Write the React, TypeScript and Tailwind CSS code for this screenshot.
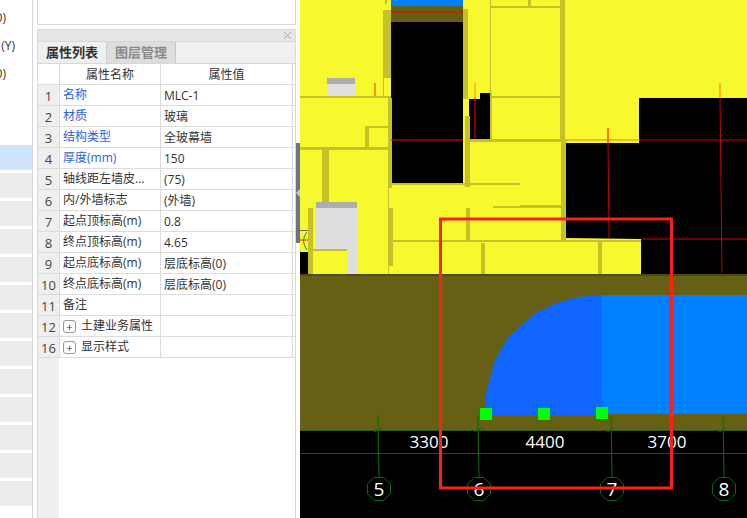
const fontStack = { fontFamily: '"Open Sans", "Noto Sans CJK SC", sans-serif' };

const sideRows = [
  { text: "0)", kind: "plain", pad: "pr-[26px]" },
  { text: "(Y)", kind: "plain", pad: "pr-[17px]" },
  { text: "0)", kind: "plain", pad: "pr-[26px]" },
  { text: "", kind: "plain", pad: "" },
  { text: "", kind: "plain", pad: "" },
  { text: "", kind: "active", pad: "" },
  ...Array.from({ length: 12 }, () => ({ text: "", kind: "gray", pad: "" })),
];

const rows = [
  { no: "1", name: "名称", value: "MLC-1", blue: true },
  { no: "2", name: "材质", value: "玻璃", blue: true },
  { no: "3", name: "结构类型", value: "全玻幕墙", blue: true },
  { no: "4", name: "厚度(mm)", value: "150", blue: true },
  { no: "5", name: "轴线距左墙皮...", value: "(75)" },
  { no: "6", name: "内/外墙标志", value: "(外墙)" },
  { no: "7", name: "起点顶标高(m)", value: "0.8" },
  { no: "8", name: "终点顶标高(m)", value: "4.65" },
  { no: "9", name: "起点底标高(m)", value: "层底标高(0)" },
  { no: "10", name: "终点底标高(m)", value: "层底标高(0)" },
  { no: "11", name: "备注", value: "" },
  { no: "12", name: "土建业务属性", value: "", group: true },
  { no: "16", name: "显示样式", value: "", group: true },
];

// wall strips on the plan, in page coordinates: x, y, w, h
const walls = [
  [383, 10, 8, 68], [385, 0, 2, 4], [383, 78, 1, 18], [300, 96, 91, 2], [388, 98, 4, 90],
  [365, 126, 23, 2], [365, 126, 4, 22], [300, 147, 92, 3], [463, 9, 5, 90], [465, 116, 5, 71],
  [490, 0, 1, 92], [491, 6, 69, 2], [528, 0, 3, 6], [491, 96, 69, 2], [469, 139, 92, 3],
  [490, 92, 2, 47], [560, 0, 5, 140], [561, 140, 5, 100], [520, 205, 41, 2], [393, 240, 248, 2],
  [598, 242, 4, 33], [322, 150, 7, 52], [392, 183, 128, 2], [388, 208, 5, 58], [388, 188, 1, 87],
  [466, 208, 4, 32], [493, 206, 68, 2], [481, 243, 4, 32], [308, 208, 5, 67], [313, 249, 34, 2],
];

const redLines = [
  [391, 12, 463, 12, "#ff0000"], [391, 140, 463, 140, "#ff0000"], [565, 140, 640, 140, "#ff7a10"],
  [640, 140, 747, 140, "#c80000"], [641, 239, 747, 239, "#e00000"], [608, 128, 608, 143, "#ff0000"],
  [608, 143, 609, 238, "#c80000"], [720, 83, 720, 98, "#ff7a10"], [720, 98, 722, 273, "#c80000"],
  [375, 83, 375, 96, "#ff3010"], [475, 83, 475, 98, "#ff8a10"], [475, 98, 475, 139, "#ff0000"],
];

const axes = [
  { label: "5", x: 379 },
  { label: "6", x: 479 },
  { label: "7", x: 612 },
  { label: "8", x: 724 },
];

function heptagon(cx: number, cy: number) {
  return Array.from({ length: 8 }, (_, i) => {
    const a = (i * Math.PI) / 4 + Math.PI / 8;
    return `${cx + 12.5 * Math.cos(a)},${cy + 12.5 * Math.sin(a)}`;
  }).join(" ");
}

function PlanCanvas() {
  return (
    <svg viewBox="300 0 447 518" className="block h-[518px] w-[447px] shrink-0 bg-black">
      <rect x="300" y="0" width="447" height="276" fill="#f8f82e" />
      <rect x="391" y="0" width="72" height="22" fill="#645f14" />
      <rect x="391" y="0" width="72" height="6" fill="#0080ff" />
      <rect x="391" y="22" width="72" height="161" fill="#000" />
      <polygon points="469,99 480,99 480,93 490,93 490,139 469,139" fill="#000" />
      <polygon points="639,98 747,98 747,275 641,275 641,239 565,238 565,143 639,143" fill="#000" />
      <rect x="300" y="252" width="8" height="24" fill="#000" />

      {walls.map(([x, y, w, h], i) => (
        <rect key={i} x={x} y={y} width={w} height={h} fill="#c4c228" />
      ))}

      <rect x="327" y="78" width="28" height="18" fill="#e0e0e0" />
      <rect x="327" y="78" width="28" height="6" fill="#adadad" />
      <rect x="316" y="208" width="41" height="67" fill="#dedede" />
      <rect x="316" y="202" width="41" height="6" fill="#adadad" />
      <rect x="313" y="251" width="34" height="24" fill="#f8f82e" />
      <rect x="313" y="249" width="34" height="2" fill="#c4c228" />
      <rect x="300" y="230" width="8" height="1" fill="#666" />
      <path d="M307 232 Q300 240 307 250" fill="none" stroke="#1a8a1a" />
      <line x1="300" y1="240" x2="308" y2="240" stroke="#e02020" />

      <rect x="300" y="276" width="447" height="154" fill="#666015" />
      <rect x="300" y="274" width="447" height="2" fill="#4f4a0f" />
      <path
        d="M486 415 L486 393 L495 360 L508 337 L525 322 L537 312 L557 303 L577 297 L602 295 L602 415 Z"
        fill="#1066ff"
      />
      <rect x="602" y="295" width="145" height="119" fill="#0080ff" />

      {redLines.map(([x1, y1, x2, y2, color], i) => (
        <line key={i} x1={x1} y1={y1} x2={x2} y2={y2} stroke={color as string} />
      ))}

      <line x1="300" y1="430.5" x2="747" y2="430.5" stroke="#2f5a10" />
      <line x1="300" y1="453.5" x2="747" y2="453.5" stroke="#0f5c0f" />
      {axes.map((a) => (
        <g key={a.label}>
          <line x1={a.x - 1} y1="415" x2={a.x} y2="477" stroke="#0f6a0f" />
          <line x1={a.x - 5} y1="432" x2={a.x + 3} y2="428" stroke="#0f6a0f" />
          <polygon points={heptagon(a.x, 489)} fill="none" stroke="#0f6a0f" />
          <text x={a.x} y="496" textAnchor="middle" fontSize="19" fill="#fff" style={fontStack}>
            {a.label}
          </text>
        </g>
      ))}
      <text x="429" y="448" textAnchor="middle" fontSize="17" fill="#fff" style={fontStack}>3300</text>
      <text x="545" y="448" textAnchor="middle" fontSize="17" fill="#fff" style={fontStack}>4400</text>
      <text x="667" y="448" textAnchor="middle" fontSize="17" fill="#fff" style={fontStack}>3700</text>

      <rect x="480" y="408" width="12" height="12" fill="#00ff00" />
      <rect x="538" y="408" width="12" height="12" fill="#00ff00" />
      <rect x="596" y="407" width="12" height="12" fill="#00ff00" />

      <rect x="440.5" y="219" width="231" height="269" fill="none" stroke="#ff2015" strokeWidth="3" />
    </svg>
  );
}

function PropertyRow({ row }: { row: (typeof rows)[number] }) {
  return (
    <div className="flex h-[21px] shrink-0 border-b border-[#dcdcdc] text-[12px] leading-[22px] text-[#333]">
      <div className="w-[22px] shrink-0 border-r border-[#dcdcdc] bg-[#efefef] text-center text-[13px] text-[#444]">
        {row.no}
      </div>
      <div className="flex w-[101px] shrink-0 items-center border-r border-[#dcdcdc] pl-[3px]">
        {row.group && (
          <span className="mr-[5px] flex h-[13px] w-[13px] items-center justify-center rounded-[3px] border border-[#999] text-[11px] leading-none">
            +
          </span>
        )}
        <span className={row.blue ? "text-[#2b62dc]" : ""}>{row.name}</span>
      </div>
      <div className="w-[132px] shrink-0 border-r border-[#dcdcdc] pl-[3px]">{row.value}</div>
    </div>
  );
}

export default function App() {
  return (
    <div className="flex h-[518px] w-[747px] overflow-hidden bg-white" style={fontStack}>
      <div className="w-[33px] shrink-0 border-r border-[#d8d8d8] pt-[5px]">
        <div className="flex flex-col gap-[3px]">
          {sideRows.map((r, i) => (
            <div
              key={i}
              className={
                "flex h-[25px] shrink-0 items-center justify-end overflow-hidden whitespace-nowrap text-[12px] text-[#333] " +
                r.pad +
                " " +
                (r.kind === "active" ? "bg-[#cfe4fb]" : r.kind === "gray" ? "bg-[#ededed]" : "")
              }
            >
              {r.text}
            </div>
          ))}
        </div>
      </div>

      <div className="ml-[4px] flex h-[518px] w-[259px] shrink-0 flex-col">
        <div className="h-[25px] shrink-0 border-x border-b border-[#d8d8d8]" />
        <div className="mt-[4px] flex h-[12px] shrink-0 items-center justify-end border-x border-t border-[#d8d8d8] bg-[#e6e6e6] pr-[3px]">
          <svg width="9" height="9" viewBox="0 0 9 9">
            <path d="M1 1 L8 8 M8 1 L1 8" stroke="#aaa" strokeWidth="1" />
          </svg>
        </div>
        <div className="flex h-[23px] shrink-0 border-x border-y border-[#d8d8d8] bg-[#f0f0f0] text-[13px] font-bold leading-[21px]">
          <div className="w-[69px] border-r border-[#d0d0d0] text-center text-[#333]">属性列表</div>
          <div className="w-[69px] border-r border-[#c8c8c8] bg-[#dedede] text-center text-[#8a8a8a]">图层管理</div>
        </div>
        <div className="flex flex-1 flex-col border-x border-[#d8d8d8]">
          <div className="flex h-[21px] shrink-0 border-b border-[#dcdcdc] text-[12px] leading-[22px] text-[#333]">
            <div className="w-[22px] shrink-0 border-r border-[#dcdcdc]" />
            <div className="w-[101px] shrink-0 border-r border-[#dcdcdc] text-center">属性名称</div>
            <div className="w-[132px] shrink-0 border-r border-[#dcdcdc] text-center">属性值</div>
          </div>
          {rows.map((row) => (
            <PropertyRow key={row.no} row={row} />
          ))}
          <div className="w-[21px] flex-1 bg-[#efefef]" />
        </div>
      </div>

      <div className="w-[4px] shrink-0 pt-[143px]">
        <div className="flex h-[100px] items-center justify-center bg-[#6b7480]">
          <svg width="4" height="8" viewBox="0 0 4 8">
            <path d="M4 0 L0 4 L4 8 Z" fill="#c8c8c8" />
          </svg>
        </div>
      </div>

      <PlanCanvas />
    </div>
  );
}
